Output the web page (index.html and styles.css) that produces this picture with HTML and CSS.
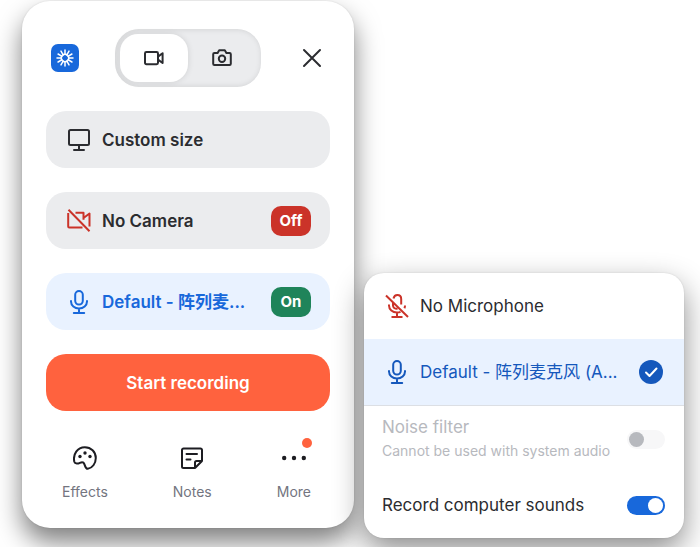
FILE: index.html
```html
<!DOCTYPE html>
<html lang="en">
  <head>
    <meta charset="UTF-8" />
    <meta name="viewport" content="width=device-width, initial-scale=1.0" />
    <title>Screen recorder</title>
    <link rel="stylesheet" href="styles.css">
  </head>
  <body>
    <!-- shared icons -->
    <svg class="sprite" aria-hidden="true">
      <symbol id="mic" viewBox="0 0 24 24">
        <rect x="8.2" y="1" width="7.6" height="13.6" rx="3.8" />
        <path d="M4 11v.6a8 7 0 0 0 16 0V11M12 18.6v4M6.8 23h10.4" />
      </symbol>
    </svg>

    <main class="recorder">
      <header class="header">
        <a href="#" class="logo" aria-label="Home">
          <svg viewBox="0 0 28 28">
            <g class="rays">
              <path id="ray" d="M14 6v4.6M14 17.4V22M6 14h4.6M17.4 14H22" />
              <use href="#ray" transform="rotate(30 14 14)" />
              <use href="#ray" transform="rotate(60 14 14)" />
              <circle cx="14" cy="14" r="3.8" />
            </g>
          </svg>
        </a>
        <div class="mode">
          <button type="button" class="mode-button active" aria-label="Record video">
            <svg class="icon-small" viewBox="0 0 20 20">
              <rect x="1" y="4" width="13" height="12.2" rx="1.4" />
              <path d="M14 8.6l4.6-3.4V15L14 11.6" />
            </svg>
          </button>
          <button type="button" class="mode-button" aria-label="Take screenshot">
            <svg class="icon-small" viewBox="0 0 20 20">
              <path d="M2.4 5h3.2L7.2 2.2h5.6L14.4 5h3.2c.7 0 1.2.5 1.2 1.2v9.6c0 .7-.5 1.2-1.2 1.2H2.4c-.7 0-1.2-.5-1.2-1.2V6.2c0-.7.5-1.2 1.2-1.2z" />
              <circle cx="10" cy="10.7" r="3.2" />
            </svg>
          </button>
        </div>
        <button type="button" class="close" aria-label="Close">
          <svg viewBox="0 0 20 20"><path d="M2 2l16 16M18 2L2 18" /></svg>
        </button>
      </header>

      <button type="button" class="option">
        <svg class="icon" viewBox="0 0 24 24">
          <rect x="2" y="2" width="20" height="15" rx="1.5" />
          <path d="M12 17v4.500M7 22h10" />
        </svg>
        <span class="option-label">Custom size</span>
      </button>

      <button type="button" class="option">
        <svg class="icon red" viewBox="0 0 24 24">
          <path d="M1.2 4v13.5c0 .6.4 1 1 1h13.3M8.5 3.8h8v7M16.5 9l6-4.5v13M1.5.8l21 21.4" />
        </svg>
        <span class="option-label">No Camera</span>
        <span class="badge off">Off</span>
      </button>

      <button type="button" class="option selected">
        <svg class="icon" viewBox="0 0 24 24"><use href="#mic" /></svg>
        <span class="option-label">Default - 阵列麦...</span>
        <span class="badge on">On</span>
      </button>

      <button type="button" class="start">Start recording</button>

      <nav class="footer">
        <button type="button" class="tool">
          <svg class="icon" viewBox="0 0 24 24">
            <path d="M1.3 15.7C-.3 8 4.500 1.2 11.8 1.2c6.2 0 11 4.6 11 10.8 0 5.5-3.600 10.3-8 10.8-3.600.2-2.300-6.4-5.300-6.6-2.200-.2-3.200 1.7-5.700 1.4-1.300-.1-2.200-.8-2.500-1.900z" />
            <circle class="dot" cx="7" cy="10.5" r="1.7" />
            <circle class="dot" cx="12" cy="7" r="1.7" />
            <circle class="dot" cx="17" cy="10.5" r="1.7" />
          </svg>
          Effects
        </button>
        <button type="button" class="tool">
          <svg class="icon" viewBox="0 0 24 24">
            <path d="M22 15V4c0-.8-.7-1.5-1.5-1.5h-17C2.7 2.5 2 3.2 2 4v16.500c0 .8.7 1.500 1.500 1.500H15zM22 15h-5.500c-.8 0-1.500.7-1.500 1.500V22M6.500 8H17M6.500 13.500h4" />
          </svg>
          Notes
        </button>
        <button type="button" class="tool more">
          <svg class="icon" viewBox="0 0 24 24">
            <circle class="dot" cx="2.2" cy="12" r="2.2" />
            <circle class="dot" cx="12" cy="12" r="2.2" />
            <circle class="dot" cx="21.8" cy="12" r="2.2" />
          </svg>
          More
        </button>
      </nav>
    </main>

    <section class="menu">
      <button type="button" class="device">
        <svg class="icon red" viewBox="0 0 24 24">
          <path d="M8.5 4.5C9 2.3 10.400 1 12.300 1c2.300 0 3.900 1.700 3.900 4v5.500M8 9v2.500c0 2 1.700 3.500 4.500 3.300M4 10.500v1c0 4 3.500 7 8 7 1.300 0 2.500-.2 3.500-.7M20 11.500c0 1-.2 2-.6 2.800M12 18.600v4M6.500 23h11M1 1.500l22 21.500" />
        </svg>
        <span class="device-label">No Microphone</span>
      </button>
      <button type="button" class="device selected">
        <svg class="icon" viewBox="0 0 24 24"><use href="#mic" /></svg>
        <span class="device-label">Default - 阵列麦克风 (A...</span>
        <svg class="check" viewBox="0 0 24 24">
          <circle cx="12" cy="12" r="12" />
          <path d="M7 12.500l3.500 3.500 7-7.500" />
        </svg>
      </button>
      <div class="settings">
        <label class="setting disabled" for="noise">
          <span>
            Noise filter
            <small>Cannot be used with system audio</small>
          </span>
          <input type="checkbox" class="switch" id="noise" disabled />
        </label>
        <label class="setting" for="sounds">
          <span>Record computer sounds</span>
          <input type="checkbox" class="switch" id="sounds" checked />
        </label>
      </div>
    </section>
  </body>
</html>
```

FILE: styles.css
```css
* {
  box-sizing: border-box;
}

body {
  display: grid;
  grid-template-columns: minmax(0, 332fr) minmax(0, 320fr);
  gap: 10px;
  min-height: 100vh;
  margin: 0;
  padding: 1px 16px 9px 22px;
  background-color: #fff;
  color: #2b2c30;
  font-family: Inter, "Noto Sans CJK SC", sans-serif;
  font-size: 17px;
  line-height: 24px;
}

button {
  padding: 0;
  border: 0;
  background: none;
  color: inherit;
  font: inherit;
  cursor: pointer;
}

svg {
  display: block;
  flex: none;
  fill: none;
  stroke: currentColor;
  stroke-width: 2;
  stroke-linecap: round;
  stroke-linejoin: round;
}

.sprite {
  display: none;
}

.icon {
  width: 24px;
  height: 24px;
}

.icon-small {
  width: 20px;
  height: 20px;
}

.dot {
  fill: currentColor;
  stroke: none;
}

.red {
  color: #cb3329;
  stroke-linecap: butt;
}

/* recorder panel */

.recorder {
  display: flex;
  flex-direction: column;
  align-self: start;
  gap: 24px;
  padding: 28px 24px 26px;
  border-radius: 28px;
  background-color: #fff;
  box-shadow: 0 14px 26px rgba(0, 0, 0, 0.5), 0 0 2px rgba(0, 0, 0, 0.12);
}

.header {
  display: flex;
  align-items: center;
  justify-content: space-between;
  padding: 0 3px 0 5px;
}

.logo {
  width: 28px;
  height: 28px;
  border-radius: 7px;
  background-color: #1868db;
  color: #fff;
}

.rays {
  stroke-width: 1.5;
}

.mode {
  display: flex;
  height: 58px;
  padding: 5px;
  border-radius: 24px;
  background-color: #ebecee;
  box-shadow: inset 1px 0 6px rgba(0, 0, 0, 0.12);
}

.mode-button {
  display: flex;
  align-items: center;
  justify-content: center;
  width: 68px;
  border-radius: 18px;
}

.mode-button.active {
  background-color: #fff;
  box-shadow: 0 0 6px rgba(0, 0, 0, 0.12);
}

.close {
  padding: 5px;
}

.close svg {
  width: 20px;
  height: 20px;
}

.option {
  display: flex;
  align-items: center;
  gap: 11px;
  height: 57px;
  padding: 0 19px 0 21px;
  border-radius: 20px;
  background-color: #ebecee;
  font-weight: 600;
  text-align: left;
}

.option-label,
.device-label {
  flex: 1;
  overflow: hidden;
  text-overflow: ellipsis;
  white-space: nowrap;
}

.option.selected {
  background-color: #e9f2ff;
  color: #1868db;
}

.badge {
  width: 40px;
  border-radius: 10px;
  color: #fff;
  font-size: 15px;
  font-weight: 700;
  line-height: 30px;
  text-align: center;
}

.off {
  background-color: #cb3329;
}

.on {
  background-color: #1f845a;
}

.start {
  height: 57px;
  border-radius: 20px;
  background-color: #ff623e;
  color: #fff;
  font-weight: 600;
}

.footer {
  display: flex;
  justify-content: space-between;
  padding: 11px 19px 0 16px;
}

.tool {
  display: flex;
  flex-direction: column;
  align-items: center;
  gap: 12px;
  color: #73757f;
  font-size: 14px;
  line-height: 20px;
}

.tool svg {
  color: #1d1d22;
}

.more {
  position: relative;
}

.more::after {
  content: "";
  position: absolute;
  top: -8px;
  right: -1px;
  width: 10px;
  height: 10px;
  border-radius: 50%;
  background-color: #ff623e;
}

/* microphone menu */

.menu {
  align-self: end;
  border-radius: 20px;
  background-color: #fff;
  box-shadow: 0 12px 30px rgba(0, 0, 0, 0.45), 0 0 2px rgba(0, 0, 0, 0.12);
  overflow: hidden;
}

.device {
  display: flex;
  align-items: center;
  gap: 11px;
  width: 100%;
  height: 66px;
  padding: 0 21px;
  text-align: left;
}

.device.selected {
  background-color: #e9f2ff;
  color: #1558bc;
}

.check {
  width: 24px;
  height: 24px;
}

.check circle {
  fill: currentColor;
  stroke: none;
}

.check path {
  stroke: #fff;
}

.settings {
  padding: 9px 19px 21px 18px;
  border-top: 1px solid #dcdfe4;
}

.setting {
  display: flex;
  align-items: center;
  justify-content: space-between;
  cursor: pointer;
}

.setting + .setting {
  margin-top: 30px;
}

.setting.disabled {
  color: #b7b9be;
  cursor: default;
}

.setting small {
  display: block;
  font-size: 14px;
}

.switch {
  flex: none;
  width: 38px;
  height: 19px;
  margin: 0;
  padding: 2px;
  border-radius: 10px;
  background-color: #f7f7f8;
  appearance: none;
}

.switch::before {
  content: "";
  display: block;
  width: 15px;
  height: 15px;
  border-radius: 50%;
  background-color: #b7b9be;
}

.switch:checked {
  background-color: #1868db;
}

.switch:checked::before {
  margin-left: auto;
  background-color: #fff;
}
```
